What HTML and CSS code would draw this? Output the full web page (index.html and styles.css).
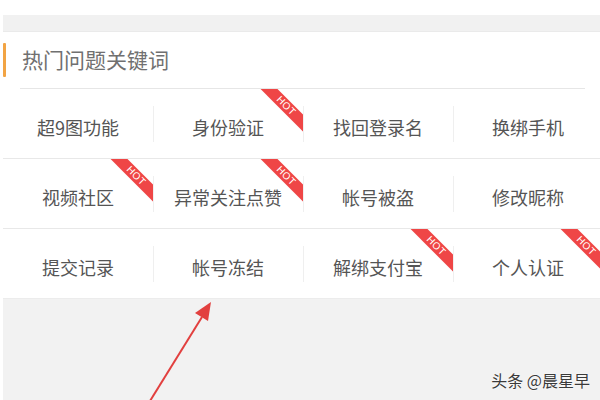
FILE: index.html
```html
<!DOCTYPE html>
<html lang="zh-CN">
<head>
  <meta charset="UTF-8" />
  <meta name="viewport" content="width=device-width, initial-scale=1.0" />
  <title>热门问题关键词</title>
  <link rel="stylesheet" href="styles.css">
</head>
<body>
  <div class="page">
    <div class="top-space"></div>
    <div class="gap-band"></div>

    <section class="hot-card">
      <div class="card-head">
        <span class="head-title">热门问题关键词</span>
      </div>
      <div class="head-line"></div>

      <div class="kw-row">
        <a class="kw">超9图功能</a>
        <a class="kw">身份验证<span class="hot">HOT</span></a>
        <a class="kw">找回登录名</a>
        <a class="kw">换绑手机</a>
      </div>
      <div class="kw-row">
        <a class="kw">视频社区<span class="hot">HOT</span></a>
        <a class="kw">异常关注点赞<span class="hot">HOT</span></a>
        <a class="kw">帐号被盗</a>
        <a class="kw">修改昵称</a>
      </div>
      <div class="kw-row">
        <a class="kw">提交记录</a>
        <a class="kw">帐号冻结</a>
        <a class="kw">解绑支付宝<span class="hot">HOT</span></a>
        <a class="kw">个人认证<span class="hot">HOT</span></a>
      </div>
    </section>

    <div class="footer-area">
      <span class="watermark">头条 @晨星早</span>
    </div>
  </div>

  <!-- 标注箭头 -->
  <svg class="arrow" width="600" height="400" viewBox="0 0 600 400">
    <line x1="150" y1="401" x2="202" y2="317" stroke="#e2403f" stroke-width="2" />
    <polygon points="211,302 208,321 195,313" fill="#e2403f" />
  </svg>
</body>
</html>
```

FILE: styles.css
```css
html, body {
  margin: 0;
  padding: 0;
  width: 100%;
  height: 100%;
  overflow: hidden;
  background: #fff;
  font-family: "Noto Sans CJK SC", "Noto Sans", sans-serif;
}

.page {
  width: 600px;
  height: 400px;
  margin-left: 3px;
  display: flex;
  flex-direction: column;
}

.top-space {
  height: 15px;
  background: #fff;
}

.gap-band {
  height: 17px;
  background: #f1f1f1;
  box-shadow: inset 0 -1px 1px rgba(0, 0, 0, 0.03);
}

.hot-card {
  background: #fff;
}

.card-head {
  height: 56px;
  display: flex;
  align-items: center;
}

.card-head::before {
  content: "";
  width: 3px;
  height: 34px;
  background: #f2a444;
  border-radius: 1px;
}

.head-title {
  margin-left: 16px;
  margin-bottom: 3px;
  font-size: 21px;
  color: #707070;
}

.head-line {
  height: 1px;
  margin: 0 18px 0 17px;
  background: #e6e6e6;
}

.kw-row {
  display: grid;
  grid-template-columns: repeat(4, 150px);
  height: 69px;
  border-bottom: 1px solid #e8e8e8;
}

.kw-row:last-child {
  border-bottom-color: #ececec;
}

.kw {
  position: relative;
  overflow: hidden;
  display: flex;
  align-items: center;
  justify-content: center;
  padding-top: 6px;
  font-size: 18px;
  color: #555;
  cursor: pointer;
}

.kw + .kw::before {
  content: "";
  position: absolute;
  left: 0;
  top: 17px;
  width: 1px;
  height: 36px;
  background: #efefef;
}

.hot {
  position: absolute;
  top: 11px;
  right: -13px;
  width: 60px;
  height: 12px;
  line-height: 12px;
  background: #ef4646;
  color: #fff;
  font-family: "Liberation Sans", Arial, sans-serif;
  font-size: 10px;
  text-align: center;
  letter-spacing: 0.5px;
  transform: rotate(45deg);
}

.footer-area {
  flex: 1;
  background: #f2f2f2;
  display: flex;
  justify-content: flex-end;
  align-items: flex-end;
  padding: 0 13px 10px 0;
}

.watermark {
  font-size: 16px;
  line-height: 20px;
  color: #3a3a3a;
  text-shadow: 0 0 2px #fff, 0 0 1px #fff;
}

.arrow {
  position: absolute;
  top: 0;
  left: 0;
  pointer-events: none;
}
```
